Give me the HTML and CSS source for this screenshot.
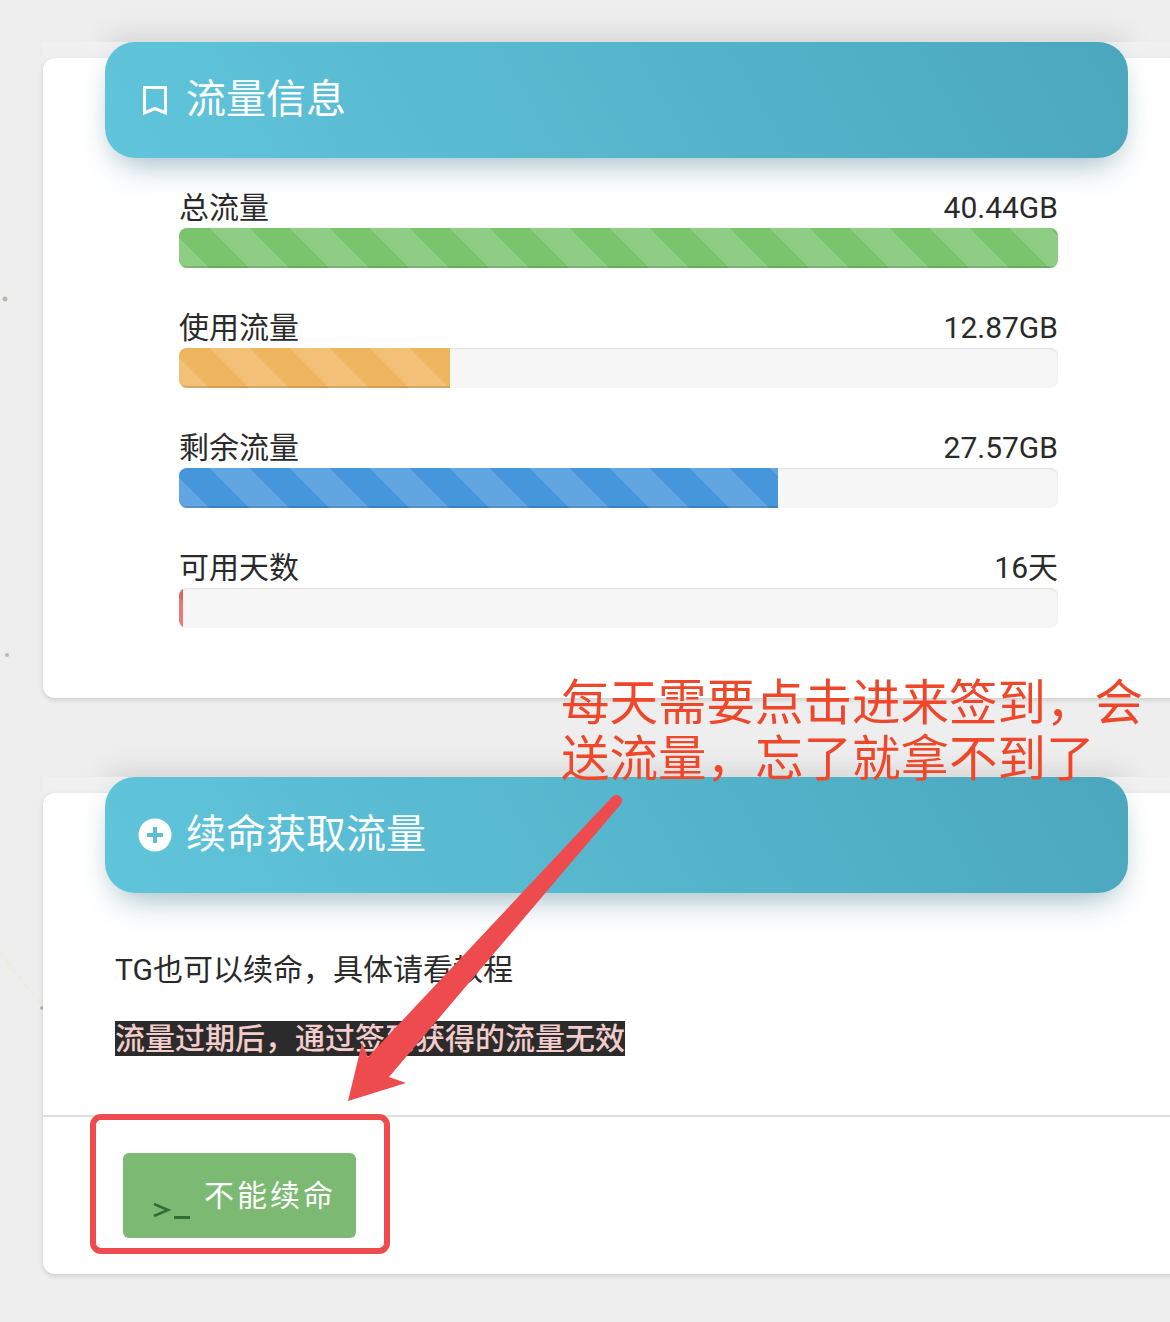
FILE: index.html

```html
<!DOCTYPE html>
<html lang="zh-CN">
<head>
  <meta charset="UTF-8" />
  <meta name="viewport" content="width=device-width, initial-scale=1.0"/>
  <title>流量信息</title>
  <link rel="stylesheet" href="styles.css">
</head>
<body>
  <svg class="bg-marks" width="60" height="1322" viewBox="0 0 60 1322">
    <circle cx="5" cy="299" r="2.5" fill="#b4b8ae"/>
    <circle cx="7" cy="655" r="2" fill="#b8b8b8"/>
    <path d="M0 953 L42 1006" stroke="#e4f0da" stroke-width="2" stroke-dasharray="5 5" fill="none"/>
    <circle cx="42" cy="1008" r="2" fill="#b8b8b8"/>
  </svg>

  <section class="band">
    <div class="card">
      <div class="card-header">
        <svg class="header-icon" width="36" height="36" viewBox="0 0 36 36">
          <path d="M7.5 5.5 H28.5 V31 L18 26.5 L7.5 31 Z" fill="none" stroke="#fff" stroke-width="3"/>
        </svg>
        <h2>流量信息</h2>
      </div>
      <div class="stats">
        <div class="stat">
          <div class="stat-label"><span>总流量</span><span>40.44GB</span></div>
          <div class="progress"><div class="bar bar-green" style="width:100%"></div></div>
        </div>
        <div class="stat">
          <div class="stat-label"><span>使用流量</span><span>12.87GB</span></div>
          <div class="progress"><div class="bar bar-orange" style="width:30.83%"></div></div>
        </div>
        <div class="stat">
          <div class="stat-label"><span>剩余流量</span><span>27.57GB</span></div>
          <div class="progress"><div class="bar bar-blue" style="width:68.15%"></div></div>
        </div>
        <div class="stat">
          <div class="stat-label"><span>可用天数</span><span>16天</span></div>
          <div class="progress"><div class="bar bar-red" style="width:0.5%"></div></div>
        </div>
      </div>
    </div>
  </section>

  <section class="band band-second">
    <div class="card">
      <div class="card-header">
        <svg class="header-icon" width="36" height="36" viewBox="0 0 36 36">
          <circle cx="18" cy="18" r="16.5" fill="#fff"/>
          <path d="M18 10 V26 M10 18 H26" stroke="#5bbdd4" stroke-width="4" fill="none"/>
        </svg>
        <h2>续命获取流量</h2>
      </div>
      <div class="card-body">
        <p>TG也可以续命，具体请看教程</p>
        <p><span class="warn">流量过期后，通过签到获得的流量无效</span></p>
      </div>
      <div class="card-footer">
        <a class="btn">
          <svg class="btn-icon" width="38" height="18" viewBox="0 0 38 18">
            <path d="M1 2 L15 8 L1 14" fill="none" stroke="#2f6f36" stroke-width="2.6"/>
            <path d="M21 15.5 H37" stroke="#2f6f36" stroke-width="3"/>
          </svg>
          <span class="btn-text">不能续命</span>
        </a>
      </div>
    </div>
  </section>

  <!-- annotations drawn on top of the screenshot -->
  <div class="note">每天需要点击进来签到，会<br>送流量，忘了就拿不到了</div>
  <div class="mark-box"></div>
  <svg class="arrow" width="1170" height="1322" viewBox="0 0 1170 1322">
    <circle cx="616.5" cy="800.5" r="5.5" fill="#ee4b4e"/>
    <path d="M612 797 L368 1057 L362 1043 L348 1101 L406 1083 L389 1077 L621 804 Z" fill="#ee4b4e"/>
  </svg>
</body>
</html>
```

FILE: styles.css

```css
* {
  box-sizing: border-box;
}
html, body {
  height: 1322px;
}
body {
  margin: 0;
  padding-top: 42px;
  position: relative;
  overflow: hidden;
  background: #eeeeee;
  color: #2a2a2a;
  font-family: Roboto, "Noto Sans CJK SC", sans-serif;
  font-size: 30px;
}
.bg-marks {
  position: absolute;
  left: 0;
  top: 0;
}

/* lighter strip above each card, the header hangs over it */
.band {
  position: relative;
  margin: 0 -20px 0 43px;
  padding-top: 16px;
  background: linear-gradient(to bottom, #f1f1f1, #f0f0f0 16px, transparent 16px);
}
.band::before {
  content: "";
  position: absolute;
  top: 0;
  left: 62px;
  right: 62px;
  height: 20px;
  border-radius: 20px;
  box-shadow: 0 -2px 28px rgba(0, 0, 0, 0.16);
  clip-path: inset(-70px -70px 100% -70px);
}
.band-second {
  margin-top: 79px;
}
.card {
  display: flow-root;
  background: #fff;
  border-radius: 12px;
  box-shadow: 0 2px 5px rgba(0, 0, 0, 0.14);
}
.card-header {
  display: flex;
  align-items: center;
  gap: 13px;
  height: 116px;
  margin: -16px 62px 0;
  padding-left: 32px;
  border-radius: 30px;
  position: relative;
  background: linear-gradient(60deg, #60c5db, #4ba7be);
  box-shadow: 0 18px 34px -14px rgba(40, 110, 135, 0.45), 0 4px 25px rgba(0, 0, 0, 0.06);
  clip-path: inset(0 -70px -70px -70px round 30px);
  color: #fff;
}
.card-header h2 {
  margin: 0;
  font-size: 40px;
  font-weight: 400;
  line-height: 1;
}
.header-icon {
  flex: none;
}

.stats {
  padding: 30px 132px 70px 136px;
}
.stat + .stat {
  margin-top: 40px;
}
.stat-label {
  display: flex;
  justify-content: space-between;
  height: 40px;
  line-height: 40px;
}
.progress {
  height: 40px;
  border-radius: 8px;
  overflow: hidden;
  background: #f7f7f7;
  box-shadow: inset 0 1px 2px rgba(0, 0, 0, 0.1);
}
.bar {
  height: 100%;
  background-image: linear-gradient(45deg,
    rgba(255, 255, 255, 0.15) 25%, transparent 25%,
    transparent 50%, rgba(255, 255, 255, 0.15) 50%,
    rgba(255, 255, 255, 0.15) 75%, transparent 75%);
  background-size: 80px 80px;
  background-position: 31px 0;
  box-shadow: inset 0 -2px 0 rgba(0, 0, 0, 0.12);
}
.bar-green { background-color: #7ac46e; }
.bar-orange { background-color: #f0b55f; }
.bar-blue { background-color: #4596da; }
.bar-red { background-color: #e2645f; }

.card-body {
  padding: 59px 72px 58px;
}
.card-body p {
  margin: 0;
  line-height: 36px;
}
.card-body p + p {
  margin-top: 33px;
}
.warn {
  background: #2b2b2b;
  color: #f2cdcc;
  font-weight: 500;
}
.card-footer {
  padding: 36px 80px 36px;
  border-top: 2px solid #dfdfdf;
}
.btn {
  display: inline-flex;
  align-items: center;
  gap: 13px;
  width: 233px;
  height: 85px;
  padding-left: 30px;
  border-radius: 6px;
  background: #7cb972;
  color: #fff;
  letter-spacing: 3px;
}
.btn-icon {
  flex: none;
  margin-top: 30px;
}
.btn-text {
  margin-bottom: 6px;
}

.note {
  position: absolute;
  left: 561px;
  top: 676px;
  width: 609px;
  font-size: 48.5px;
  line-height: 56px;
  white-space: nowrap;
  color: #f0462a;
}
.mark-box {
  position: absolute;
  left: 90px;
  top: 1114px;
  width: 300px;
  height: 140px;
  border: 6px solid #ee4b4e;
  border-radius: 11px;
}
.arrow {
  position: absolute;
  left: 0;
  top: 0;
}
```
